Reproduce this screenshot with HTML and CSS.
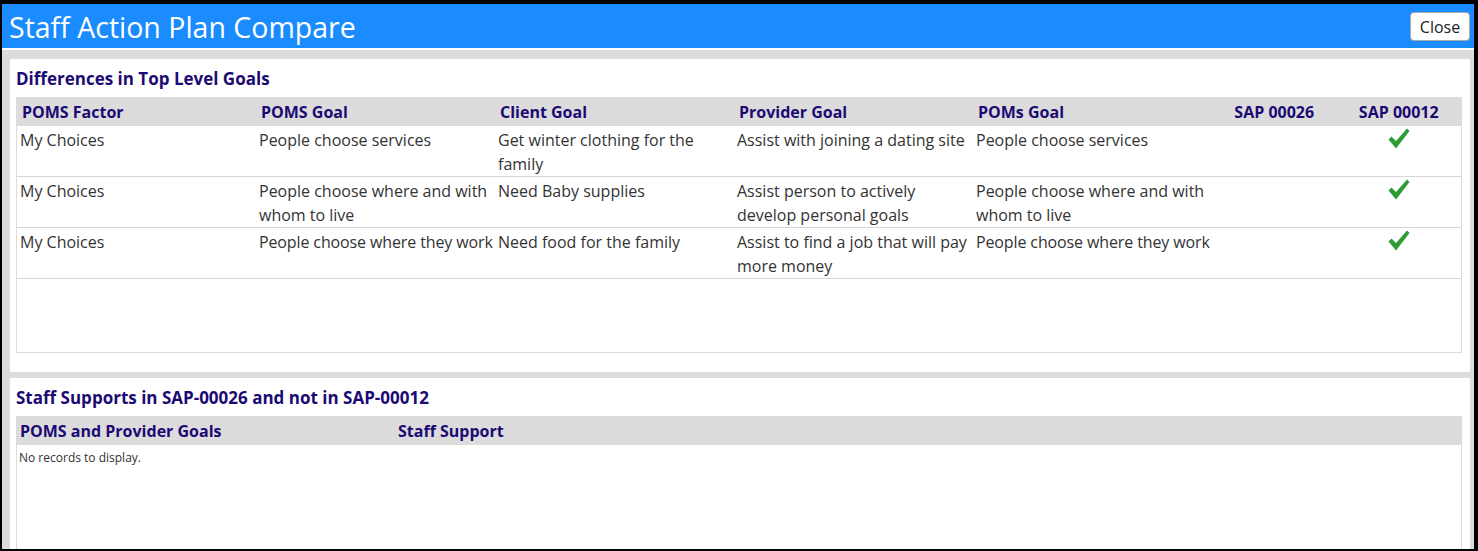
FILE: index.html
```html
<!DOCTYPE html>
<html lang="en">
<head>
    <meta charset="UTF-8">
    <title>Staff Action Plan Compare</title>
    <link rel="stylesheet" href="styles.css">
</head>
<body>
    <div class="window">
        <div class="titleBar">
            <h1 class="title">Staff Action Plan Compare</h1>
            <button class="closeBtn">Close</button>
        </div>

        <div class="content">
            <div class="panel">
                <h2 class="panelTitle">Differences in Top Level Goals</h2>
                <div class="grid goalsGrid">
                    <table>
                        <colgroup>
                            <col class="wideCol">
                            <col class="wideCol">
                            <col class="wideCol">
                            <col class="wideCol">
                            <col class="wideCol">
                            <col>
                            <col>
                        </colgroup>
                        <thead>
                            <tr>
                                <th>POMS Factor</th>
                                <th>POMS Goal</th>
                                <th>Client Goal</th>
                                <th>Provider Goal</th>
                                <th>POMs Goal</th>
                                <th class="center">SAP 00026</th>
                                <th class="center">SAP 00012</th>
                            </tr>
                        </thead>
                        <tbody>
                            <tr>
                                <td>My Choices</td>
                                <td>People choose services</td>
                                <td>Get winter clothing for the family</td>
                                <td>Assist with joining a dating site</td>
                                <td>People choose services</td>
                                <td></td>
                                <td class="center"><svg class="check" viewBox="0 0 22 21"><path d="M0.5 11.5 L3.5 8.5 L8 13 L19 0.5 L21.5 3 L8 20.5 Z"/></svg></td>
                            </tr>
                            <tr>
                                <td>My Choices</td>
                                <td>People choose where and with whom to live</td>
                                <td>Need Baby supplies</td>
                                <td>Assist person to actively develop personal goals</td>
                                <td>People choose where and with whom to live</td>
                                <td></td>
                                <td class="center"><svg class="check" viewBox="0 0 22 21"><path d="M0.5 11.5 L3.5 8.5 L8 13 L19 0.5 L21.5 3 L8 20.5 Z"/></svg></td>
                            </tr>
                            <tr>
                                <td>My Choices</td>
                                <td class="tight">People choose where they work</td>
                                <td>Need food for the family</td>
                                <td>Assist to find a job that will pay more money</td>
                                <td class="tight">People choose where they work</td>
                                <td></td>
                                <td class="center"><svg class="check" viewBox="0 0 22 21"><path d="M0.5 11.5 L3.5 8.5 L8 13 L19 0.5 L21.5 3 L8 20.5 Z"/></svg></td>
                            </tr>
                        </tbody>
                    </table>
                </div>
            </div>

            <div class="panel">
                <h2 class="panelTitle">Staff Supports in SAP-00026 and not in SAP-00012</h2>
                <div class="grid supportsGrid">
                    <table>
                        <colgroup>
                            <col class="goalsCol">
                            <col>
                        </colgroup>
                        <thead>
                            <tr>
                                <th>POMS and Provider Goals</th>
                                <th>Staff Support</th>
                            </tr>
                        </thead>
                    </table>
                    <div class="noRecords">No records to display.</div>
                </div>
            </div>
        </div>
    </div>
</body>
</html>
```

FILE: styles.css
```css
* {
    box-sizing: border-box;
}
body {
    margin: 0;
    font-family: "Open Sans", "Noto Sans", sans-serif;
    color: #333;
}
.window {
    width: 1478px;
    height: 551px;
    border: 2px solid #000;
    border-top-width: 4px;
    border-right-width: 4px;
    display: flex;
    flex-direction: column;
    overflow: hidden;
}
.titleBar {
    height: 46px;
    flex-shrink: 0;
    background: #1a8cff;
    border-bottom: 2px solid #fff;
    display: flex;
    align-items: center;
    justify-content: space-between;
    padding: 0 4px 0 7px;
}
.title {
    margin: 0;
    margin-top: 2px;
    font-size: 28.5px;
    font-weight: 400;
    color: #fff;
    line-height: 40px;
}
.closeBtn {
    width: 60px;
    height: 29px;
    background: #fff;
    border: 1px solid #a9a9a9;
    border-radius: 4px;
    font-family: inherit;
    font-size: 16px;
    color: #222;
    padding: 0;
    margin-top: 1px;
}
.content {
    flex: 1;
    background: #dcdcdc;
    padding: 9px 4px 0 8px;
    display: flex;
    flex-direction: column;
    gap: 6px;
    overflow: hidden;
}
.panel {
    flex-shrink: 0;
    background: #fff;
    padding: 0 8px 19px 6px;
}
.panelTitle {
    margin: 0;
    padding: 8px 0 6px;
    font-size: 17px;
    line-height: 24px;
    font-weight: 700;
    color: #1c0a74;
}
.grid {
    border: 1px solid #dcdcdc;
}
.goalsGrid {
    height: 256px;
}
.supportsGrid {
    height: 220px;
}
table {
    width: 100%;
    border-collapse: collapse;
    table-layout: fixed;
}
.wideCol {
    width: 239px;
}
.goalsCol {
    width: 378px;
}
th {
    background: #dcdcdc;
    height: 28px;
    padding: 0 5px;
    text-align: left;
    font-size: 16px;
    font-weight: 700;
    color: #1c0a74;
}
td {
    padding: 2px 3px 0;
    font-size: 16px;
    line-height: 24px;
    vertical-align: top;
    border-bottom: 1px solid #d6d6d6;
}
/* one-liners that only just fit the column */
td.tight {
    padding-right: 0;
    letter-spacing: -0.12px;
}
.center {
    text-align: center;
}
.check {
    width: 22px;
    height: 21px;
    fill: #2e9b36;
    display: inline-block;
    vertical-align: top;
}
.supportsGrid th {
    padding: 0 3px;
}
.noRecords {
    font-size: 12px;
    padding: 4px 2px;
}
```
